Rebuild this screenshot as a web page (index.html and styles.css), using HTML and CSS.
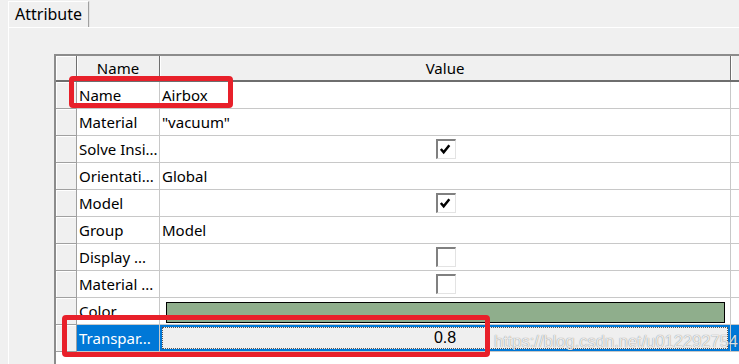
FILE: index.html
```html
<!DOCTYPE html>
<html lang="en">
<head>
    <meta charset="UTF-8">
    <title>Attribute</title>
    <link rel="stylesheet" href="styles.css">
</head>
<body>
    <div class="tabs">
        <div class="tab">Attribute</div>
    </div>
    <div class="panel">
        <div class="grid">
            <div class="row head">
                <div class="rh corner"></div>
                <div class="hc name-col">Name</div>
                <div class="hc value-col">Value</div>
                <div class="hc fill"></div>
            </div>
            <div class="row">
                <div class="rh"></div>
                <div class="c name-col">Name</div>
                <div class="c value-col">Airbox</div>
                <div class="c fill"></div>
            </div>
            <div class="row">
                <div class="rh"></div>
                <div class="c name-col">Material</div>
                <div class="c value-col">"vacuum"</div>
                <div class="c fill"></div>
            </div>
            <div class="row">
                <div class="rh"></div>
                <div class="c name-col">Solve Insi...</div>
                <div class="c value-col center">
                    <span class="check">
                        <svg width="18" height="18" viewBox="0 0 18 18"><polyline points="3,8 6,11.5 12,4" fill="none" stroke="#000" stroke-width="2.6"/></svg>
                    </span>
                </div>
                <div class="c fill"></div>
            </div>
            <div class="row">
                <div class="rh"></div>
                <div class="c name-col">Orientati...</div>
                <div class="c value-col">Global</div>
                <div class="c fill"></div>
            </div>
            <div class="row">
                <div class="rh"></div>
                <div class="c name-col">Model</div>
                <div class="c value-col center">
                    <span class="check">
                        <svg width="18" height="18" viewBox="0 0 18 18"><polyline points="3,8 6,11.5 12,4" fill="none" stroke="#000" stroke-width="2.6"/></svg>
                    </span>
                </div>
                <div class="c fill"></div>
            </div>
            <div class="row">
                <div class="rh"></div>
                <div class="c name-col">Group</div>
                <div class="c value-col">Model</div>
                <div class="c fill"></div>
            </div>
            <div class="row">
                <div class="rh"></div>
                <div class="c name-col">Display ...</div>
                <div class="c value-col center"><span class="check"></span></div>
                <div class="c fill"></div>
            </div>
            <div class="row">
                <div class="rh"></div>
                <div class="c name-col">Material ...</div>
                <div class="c value-col center"><span class="check"></span></div>
                <div class="c fill"></div>
            </div>
            <div class="row">
                <div class="rh"></div>
                <div class="c name-col">Color</div>
                <div class="c value-col"><span class="swatch"></span></div>
                <div class="c fill"></div>
            </div>
            <div class="row selected">
                <div class="rh"></div>
                <div class="c name-col">Transpar...</div>
                <div class="c value-col"><span class="editor">0.8</span></div>
                <div class="c fill"></div>
            </div>
        </div>
    </div>

    <div class="mark mark-name"></div>
    <div class="mark mark-transp"></div>
    <div class="watermark">https://blog.csdn.net/u012292754</div>
</body>
</html>
```

FILE: styles.css
```css
html, body {
    margin: 0;
    height: 100%;
    overflow: hidden;
}
body {
    font-family: "Noto Sans", "Open Sans", sans-serif;
    background-color: #f0f0f0;
    color: #000;
    position: relative;
}
.tabs {
    height: 27px;
    display: flex;
}
.tab {
    margin: 1px 0 0 8px;
    width: 81px;
    height: 26px;
    padding-left: 6px;
    font-size: 16px;
    line-height: 24px;
    border-left: 1px solid #ffffff;
    border-top: 1px solid #ffffff;
    border-right: 1px solid #a0a0a0;
    box-shadow: 1px 0 0 #e3e3e3;
    box-sizing: border-box;
    position: relative;
    z-index: 1;
    background-color: #f0f0f0;
}
.panel {
    border-top: 1px solid #ffffff;
    border-left: 1px solid #ffffff;
    margin-left: 8px;
    padding: 26px 0 0 45px;
    height: 337px;
    box-sizing: border-box;
    overflow: hidden;
}
.grid {
    border-top: 2px solid #8c8c8c;
    border-left: 2px solid #8c8c8c;
    width: 685px;
    height: 310px;
    background-color: #ffffff;
    overflow: hidden;
}
.row {
    display: grid;
    grid-template-columns: 21px 83px 571px 1fr;
    height: 27px;
    font-size: 15px;
}
.row.head {
    height: 26px;
}
.rh {
    background-color: #f0f0f0;
    border-right: 1px solid #a0a0a0;
    border-bottom: 1px solid #a0a0a0;
    box-shadow: inset 1px 1px 0 #ffffff;
}
.hc {
    background-color: #f0f0f0;
    border-right: 1px solid #6e6e6e;
    border-bottom: 2px solid #6e6e6e;
    box-shadow: inset 1px 0 0 #ffffff;
    text-align: center;
    line-height: 24px;
}
.head .rh {
    border-right: 1px solid #6e6e6e;
    border-bottom: 2px solid #6e6e6e;
}
.hc.fill {
    border-right: none;
}
.c {
    border-right: 1px solid #c8c8c8;
    border-bottom: 1px solid #c8c8c8;
    line-height: 26px;
    padding-left: 2px;
    white-space: nowrap;
    overflow: hidden;
}
.c.fill {
    border-right: none;
}
.center {
    display: flex;
    justify-content: center;
    align-items: center;
    padding-left: 0;
}
.check {
    width: 20px;
    height: 20px;
    box-sizing: border-box;
    background-color: #ffffff;
    border-top: 2px solid #808080;
    border-left: 2px solid #808080;
    border-right: 1px solid #e3e3e3;
    border-bottom: 1px solid #e3e3e3;
    margin-left: 1px;
    display: flex;
}
.check svg {
    display: block;
}
.swatch {
    display: block;
    margin: 4px 0 0 4px;
    width: 559px;
    height: 21px;
    box-sizing: border-box;
    background-color: #8fae8c;
    border: 1px solid #000;
}
.selected .name-col {
    background-color: #0078d7;
    color: #ffffff;
}
.selected .value-col {
    background-color: #0078d7;
    padding: 2px;
    box-sizing: border-box;
}
.selected .fill {
    background-color: #0078d7;
}
.editor {
    display: block;
    height: 22px;
    box-sizing: border-box;
    background-color: #efefef;
    border: 1px dotted #555;
    text-align: center;
    line-height: 20px;
    font-family: "Liberation Sans", Arial, sans-serif;
    font-size: 16px;
}
.mark {
    position: absolute;
    border: 5px solid #e8202a;
    border-radius: 4px;
    box-sizing: border-box;
}
.mark-name {
    left: 69px;
    top: 76px;
    width: 164px;
    height: 32px;
}
.mark-transp {
    left: 62px;
    top: 315px;
    width: 428px;
    height: 42px;
}
.watermark {
    position: absolute;
    left: 494px;
    top: 332px;
    font-family: "Liberation Sans", Arial, sans-serif;
    font-size: 16.5px;
    color: rgba(255, 255, 255, 0.85);
    text-shadow: 0 0 1px rgba(0, 0, 0, 0.55);
    white-space: nowrap;
}
```
